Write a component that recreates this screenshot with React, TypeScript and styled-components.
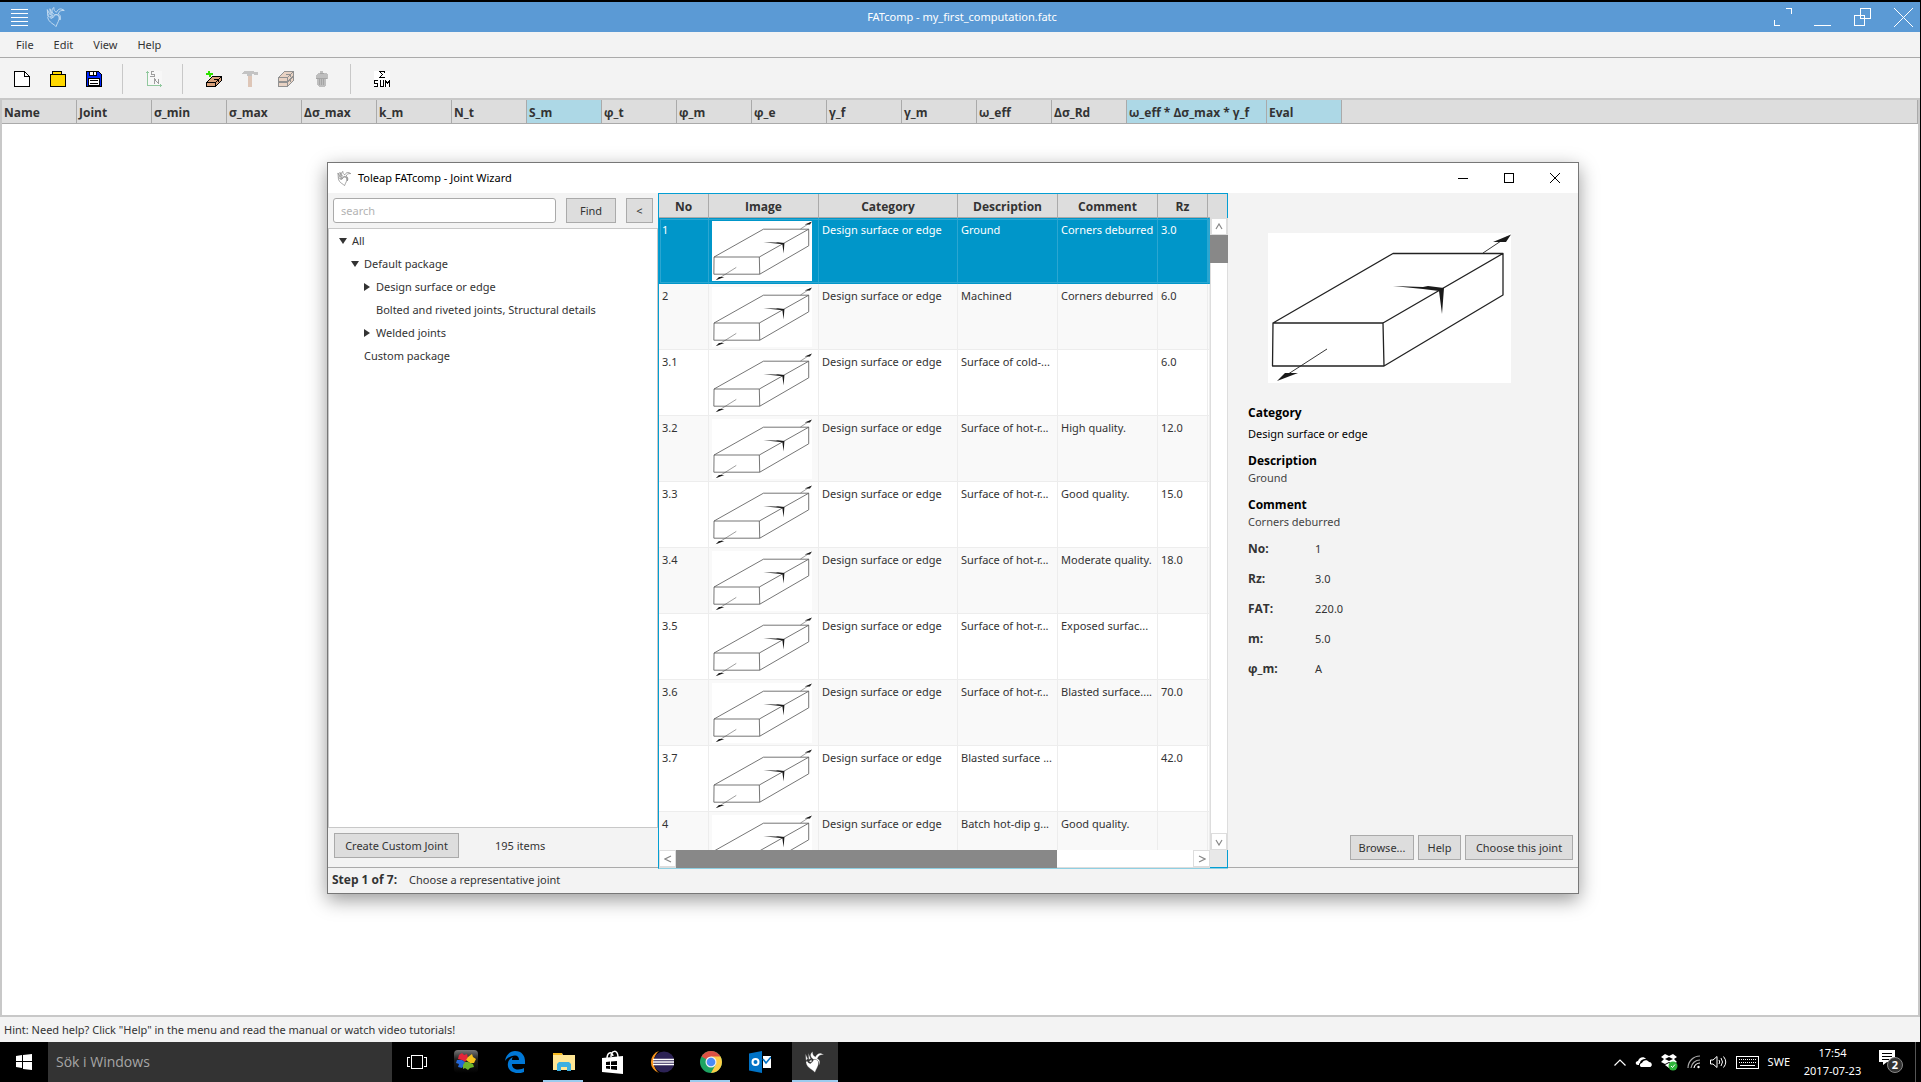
import React from "react";
import styled, { createGlobalStyle, css } from "styled-components";

const GlobalStyle = createGlobalStyle`
  *, *::before, *::after { box-sizing: border-box; }
  html, body { margin: 0; height: 100%; }
  body {
    font-family: "Noto Sans", "Open Sans", sans-serif;
    font-size: 11px;
    line-height: 18px;
    color: #333;
    background: #000;
    overflow: hidden;
  }
  button, input { font: inherit; color: inherit; }
  ul { list-style: none; margin: 0; padding: 0; }
`;

const boldText = css`
  font-family: "Open Sans", "Noto Sans", sans-serif;
  font-size: 12px;
  font-weight: bold;
`;

const Desktop = styled.div`
  position: relative;
  display: flex;
  flex-direction: column;
  height: 100vh;
`;

const MainWindow = styled.div`
  flex: 1;
  min-height: 0;
  display: flex;
  flex-direction: column;
  background: #f3f3f3;
  border-top: 2px solid #000;
  border-right: 1px solid #000;
`;

const TitleBar = styled.header`
  display: grid;
  grid-template-columns: 1fr auto 1fr;
  align-items: center;
  height: 30px;
  padding: 0 7px 0 11px;
  background: #5b9ad5;
  color: #fff;
`;

const TitleGroup = styled.div<{ $end?: boolean; $gap: number }>`
  display: flex;
  align-items: center;
  justify-content: ${(p) => (p.$end ? "flex-end" : "flex-start")};
  gap: ${(p) => p.$gap}px;
`;

const IconButton = styled.button`
  display: flex;
  align-items: center;
  justify-content: center;
  padding: 0;
  border: 0;
  background: none;
  color: inherit;
`;

const MenuBar = styled.nav`
  display: flex;
  height: 26px;
  padding: 1px 6px 0;
  border-bottom: 1px solid #aaa;
`;

const MenuItem = styled.button`
  padding: 0 10px;
  border: 0;
  background: none;
`;

const ToolBar = styled.div`
  display: flex;
  align-items: center;
  height: 40px;
  padding: 2px 14px 0;
  gap: 20px;
`;

const ToolGroup = styled.div`
  display: flex;
  align-items: center;
  gap: 20px;
  & + & {
    border-left: 1px solid #c8c8c8;
    height: 30px;
    padding-left: 23px;
  }
`;

const ResultArea = styled.section`
  flex: 1;
  min-height: 0;
  background: #fff;
  border: 2px solid #c8c8c8;
`;

const ResultTable = styled.table`
  width: 100%;
  table-layout: fixed;
  border-collapse: separate;
  border-spacing: 0;
`;

const ResultHead = styled.th<{ $w?: number; $tint?: boolean }>`
  ${boldText}
  width: ${(p) => (p.$w ? p.$w + "px" : "auto")};
  height: 24px;
  padding: 2px 0 0 2px;
  text-align: left;
  white-space: nowrap;
  background: ${(p) => (p.$tint ? "#add8e6" : "#ddd")};
  border-right: 1px solid #aaa;
  border-bottom: 1px solid #aaa;
`;

const HintBar = styled.footer`
  height: 25px;
  padding: 4px 4px 0;
`;

/* Joint wizard window */

const Wizard = styled.section`
  position: absolute;
  left: 327px;
  top: 162px;
  width: 1252px;
  height: 732px;
  display: flex;
  flex-direction: column;
  background: #f3f3f3;
  border: 1px solid #777;
  box-shadow: 0 6px 18px rgba(0, 0, 0, 0.4);
`;

const WizardTitle = styled.header`
  display: flex;
  align-items: center;
  height: 30px;
  padding: 0 18px 0 9px;
  gap: 6px;
  background: #fff;
  color: #000;
`;

const WizardName = styled.span`
  flex: 1;
`;

const WizardBody = styled.div`
  flex: 1;
  min-height: 0;
  display: grid;
  grid-template-columns: 330px 570px minmax(0, 1fr);
`;

const SidePane = styled.div`
  display: flex;
  flex-direction: column;
  min-height: 0;
`;

const SearchRow = styled.form`
  display: flex;
  align-items: center;
  gap: 10px;
  height: 35px;
  padding: 0 5px;
`;

const SearchBox = styled.input`
  flex: 1;
  min-width: 0;
  height: 25px;
  padding: 0 7px;
  background: #fff;
  border: 1px solid #aaa;
  border-radius: 3px;
  &::placeholder { color: #b3b3b3; opacity: 1; }
`;

const PushButton = styled.button<{ $w?: number }>`
  height: 25px;
  width: ${(p) => (p.$w ? p.$w + "px" : "auto")};
  padding: 0;
  line-height: 22px;
  white-space: nowrap;
  background: #ddd;
  border: 1px solid #aaa;
`;

const Tree = styled.ul`
  flex: 1;
  background: #fff;
  border: 1px solid #c8c8c8;
`;

const TreeItem = styled.li<{ $level: number }>`
  display: flex;
  align-items: center;
  gap: 5px;
  height: 23px;
  padding-left: ${(p) => 10 + p.$level * 12}px;
`;

const Twisty = styled.svg`
  width: 8px;
  height: 8px;
  fill: #333;
`;

const SideFoot = styled.div`
  display: flex;
  align-items: center;
  gap: 36px;
  height: 39px;
  padding: 0 6px 4px;
`;

const Listing = styled.div`
  position: relative;
  z-index: 1;
  display: grid;
  grid-template-columns: 1fr 18px;
  grid-template-rows: 24px 1fr 18px;
  min-height: 0;
  margin-bottom: -2px;
  border-top: 1px solid #039ed3;
  border-left: 1px solid #039ed3;
  border-bottom: 1px solid #8fd0e3;
`;

const ListingView = styled.div`
  grid-row: 1 / 3;
  grid-column: 1;
  overflow: hidden;
  background: #fff;
`;

const JointTable = styled.table`
  width: 100%;
  table-layout: fixed;
  border-collapse: separate;
  border-spacing: 0;
`;

const JointHead = styled.th<{ $w: number }>`
  ${boldText}
  width: ${(p) => p.$w}px;
  height: 24px;
  padding: 2px 0 0;
  background: #ddd;
  border-bottom: 1px solid #aaa;
  border-right: ${(p) => (p.$w > 10 ? "1px solid #aaa" : "0")};
`;

const JointCell = styled.td`
  height: 66px;
  padding: 3px 0 0 3px;
  vertical-align: top;
  white-space: nowrap;
  border-right: 1px solid #ededed;
  border-bottom: 1px solid #ededed;
`;

const JointRow = styled.tr<{ $selected?: boolean }>`
  &:nth-child(even) { background: #f9f9f9; }
  ${(p) =>
    p.$selected &&
    css`
      background: #0096c9;
      color: #fff;
      outline: 1px solid #2ba6d1;
      outline-offset: -2px;
      ${JointCell} {
        border-right-color: #2ba6d1;
        border-bottom-color: #0096c9;
      }
    `}
`;

const Corner = styled.div<{ $foot?: boolean }>`
  background: ${(p) => (p.$foot ? "#e8e8e8" : "#ddd")};
  border-right: 1px solid #039ed3;
  border-bottom: ${(p) => (p.$foot ? "1px solid #039ed3" : "0")};
`;

const ScrollBar = styled.div<{ $horizontal?: boolean }>`
  display: flex;
  flex-direction: ${(p) => (p.$horizontal ? "row" : "column")};
  background: #fff;
  border: solid #ddd;
  border-width: ${(p) => (p.$horizontal ? "0 0 1px" : "0 1px")};
`;

const ScrollButton = styled.button`
  display: flex;
  align-items: center;
  justify-content: center;
  flex: 0 0 17px;
  padding: 0;
  background: #fff;
  border: 1px solid #ddd;
  line-height: 1;
  color: #888;
`;

const Thumb = styled.div<{ $size: number; $horizontal?: boolean }>`
  flex: 0 0 ${(p) => p.$size}px;
  margin: ${(p) => (p.$horizontal ? "0 0 -1px" : "0 -1px")};
  background: #888;
`;

const Track = styled.div`
  flex: 1;
`;

const Details = styled.aside`
  display: flex;
  flex-direction: column;
  min-width: 0;
  padding: 40px 5px 7px 20px;
`;

const Preview = styled.div`
  display: flex;
  margin: 0 0 21px 20px;
`;

const Heading = styled.h3<{ $spaced?: boolean }>`
  ${boldText}
  margin: 0;
  padding-bottom: ${(p) => (p.$spaced ? 4 : 0)}px;
  line-height: 18px;
  color: #000;
`;

const Paragraph = styled.p<{ $dark?: boolean }>`
  margin: 0 0 10px;
  line-height: 16px;
  color: ${(p) => (p.$dark ? "#000" : "#444")};
`;

const Facts = styled.dl`
  display: grid;
  grid-template-columns: 67px 1fr;
  row-gap: 12px;
  margin: 0;
  dt { ${boldText} }
  dd { margin: 0; }
`;

const Actions = styled.div`
  display: flex;
  justify-content: flex-end;
  gap: 4px;
  margin-top: auto;
`;

const StepBar = styled.footer`
  display: flex;
  align-items: center;
  gap: 12px;
  height: 26px;
  padding: 0 4px 1px;
  border-top: 1px solid #aaa;
`;

const Strong = styled.strong`
  ${boldText}
`;

/* Taskbar */

const TaskBar = styled.footer`
  display: flex;
  height: 40px;
  background: #000;
  color: #fff;
`;

const StartButton = styled(IconButton)`
  width: 48px;
`;

const TaskSearch = styled.input`
  width: 344px;
  padding: 0 8px;
  border: 0;
  background: #333;
  font-family: "Open Sans", "Noto Sans", sans-serif;
  font-size: 14px;
  &::placeholder { color: #a6a6a6; opacity: 1; }
`;

const TaskButton = styled(IconButton)<{ $open?: boolean; $active?: boolean }>`
  width: 49px;
  ${(p) => p.$open && css`
    background: linear-gradient(#9ccbee, #9ccbee) 4px 100% / 40px 2px no-repeat;
  `}
  ${(p) => p.$active && css`
    background: linear-gradient(#9ccbee, #9ccbee) 0 100% / 100% 2px no-repeat #333;
    width: 46px;
    margin-left: 8px;
  `}
`;

const Tray = styled.div`
  display: flex;
  align-items: center;
  margin-left: auto;
  padding-right: 5px;
  gap: 9px;
`;

const TrayEnd = styled.div`
  display: flex;
  align-items: center;
`;

const Clock = styled.time`
  width: 67px;
  text-align: center;
`;

const Notice = styled(IconButton)`
  width: 50px;
  height: 40px;
  border-right: 1px solid #555;
`;

/* Drawings */

const Hand = ({ size, stroke, fill = "none" }: { size: number; stroke: string; fill?: string }) => (
  <svg width={size} height={size} viewBox="0 0 21 23" fill={fill} stroke={stroke} strokeWidth={fill === "none" ? 1 : 0.3} strokeLinejoin="round" aria-hidden="true">
    <path d="M8 11 C9 8 13 8 14 11 C15 15 12 18 10.500 22.500 C9 20 2 18 1 12 L2 10 C3 12 4 13 6 13 Z" />
    <path d="M9 9 C5 6 5 3 8 .5 C8 4 9 5 11 6 C13 2 16 1 20 4 C16 3.500 14 5 13 8 C16 9 16 12 15 15 C15 11 13 8 9 9 Z" />
    <path d="M1 10 L.5 3 L3 8 Z M4 9 L3.500 2 L6 8 Z M4 11 L7 9 L7 12 Z" />
  </svg>
);

const JointDrawing = ({ width, height, weight, color }: { width: number; height: number; weight: number; color: string }) => (
  <svg width={width} height={height} viewBox="0 0 243 150" preserveAspectRatio="none" style={{ display: "block" }} role="img" aria-label="Joint">
    <rect width="243" height="150" fill="#fff" />
    <g fill="none" stroke={color} strokeWidth={weight} strokeLinejoin="round">
      <path d="M5 90 L125 20.500 H235 V62 L116 133 H4.500 L5 90 H115 L116 133 M115 90 L235 20.500" />
      <path d="M59 116 L14 145 M215 20 L239 4" strokeWidth={weight * 0.7} />
    </g>
    <g fill="#1a1a1a">
      <path d="M125 53 L155 54 L160 53 L176 55 L174 81 L171 58 L155 56 Z" />
      <path d="M243 1.500 L225 9 L238 9 Z M9 148 L17 140 L30 140 Z" />
    </g>
  </svg>
);

const Px = ({ children, dim }: { children: React.ReactNode; dim?: boolean }) => (
  <svg width="16" height="16" viewBox="0 0 16 16" shapeRendering="crispEdges" opacity={dim ? 0.4 : 1} aria-hidden="true">
    {children}
  </svg>
);

const NewIcon = () => (
  <Px><path d="M.5 .5 H10.500 L15.500 5.500 V15.500 H.5 Z" fill="#fff" stroke="#000" /><path d="M10.500 .5 V5.500 H15.500" fill="none" stroke="#000" /></Px>
);
const OpenIcon = () => (
  <Px><path d="M.5 3.500 H2.500 V.5 H11.500 V3.500 H15.500 V15.500 H.5 Z" fill="#ffd800" stroke="#000" /><path d="M3 3.500 H12" stroke="#000" /></Px>
);
const SaveIcon = () => (
  <Px>
    <path d="M.5 .5 H12.500 L15.500 3.500 V15.500 H.5 Z" fill="#0026ff" stroke="#000" />
    <path d="M3 1 H11 V5 H3 Z" fill="#000" /><path d="M4 1 H7 V4 H4 Z M8 1 H10 V4 H8 Z" fill="#fff" />
    <path d="M2.500 7.500 H13.500 V14.500 H2.500 Z" fill="#fff" stroke="#000" /><path d="M4 9.500 H12 M4 12.500 H12" stroke="#000" />
  </Px>
);
const CurveIcon = () => (
  <Px dim>
    <rect x="2" width="14" height="14" fill="#fff" />
    <path d="M1.500 0 V14.500 H16 M0 1.500 H3 M14.500 13 V16" fill="none" stroke="#008a22" />
    <path d="M8 .5 H5 V3.500 H8 V5.500 H4 M8.500 13 V8 L12.500 12.500 V8" fill="none" stroke="#222" />
  </Px>
);
const Brick = ({ y }: { y: number }) => (
  <g transform={`translate(0 ${y})`}>
    <path d="M.5 6.500 L6.500 .5 H15.500 V4.500 L9.500 10.500 H.5 Z" fill="#d9a27c" stroke="#000" />
    <path d="M.5 6.500 H9.500 L15.500 .5 M9.500 6.500 V10.500 M8 3.500 H12.500 V6" fill="none" stroke="#000" />
  </g>
);
const AddJointIcon = () => (
  <Px><Brick y={5} /><path d="M0 2 H2 V0 H4 V2 H7 V4 H5 V6 H3 V4 H0 Z" fill="#2de000" /></Px>
);
const HammerIcon = () => (
  <Px dim><path d="M0 2 L3 0 H12 V1 H16 V4 H12 V3 H10 V5 H5 V3 H0 Z" fill="#7d7d7d" /><path d="M6 5 H10 V16 H6 Z" fill="#c08560" /></Px>
);
const StackIcon = () => (<Px dim><Brick y={5} /><Brick y={0} /></Px>);
const TrashIcon = () => (
  <Px dim><path d="M2 4 L4 2 H6 V0 H9 V2 H12 L14 4 V8 H12 V14 L10 16 H5 L3 14 V8 H2 Z" fill="#707070" /><path d="M2 7.500 H13 M5.500 8 V14 M7.500 8 V14 M9.500 8 V14 M6 2.500 H10" stroke="#333" fill="none" /></Px>
);
const SumIcon = () => (
  <Px>
    <rect width="16" height="16" fill="#fff" />
    <path d="M10.500 1.500 V.5 H6 L8.500 3.500 L6 6.500 H10.500 V5.500" fill="none" stroke="#000" />
    <path d="M4 9.500 H.5 V12.500 H3.500 V15.500 H0 M6.500 9 V15.500 H9.500 V9 M11.500 16 V9.500 L13.500 12 L15.500 9.500 V16" fill="none" stroke="#000" />
  </Px>
);

const WindowGlyph = ({ d, size = 19 }: { d: string; size?: number }) => (
  <svg width={size} height={size} viewBox={`0 0 ${size} ${size}`} fill="none" stroke="currentColor" shapeRendering="crispEdges" aria-hidden="true"><path d={d} /></svg>
);

const ScrollChevron = ({ d }: { d: string }) => (
  <svg width="8" height="8" viewBox="0 0 8 8" fill="none" stroke="#888" strokeWidth="1.200" aria-hidden="true"><path d={d} /></svg>
);

const resultColumns: [string, number, boolean][] = [
  ["Name", 75, false], ["Joint", 75, false], ["σ_min", 75, false], ["σ_max", 75, false], ["Δσ_max", 75, false],
  ["k_m", 75, false], ["N_t", 75, false], ["S_m", 75, true], ["φ_t", 75, false], ["φ_m", 75, false],
  ["φ_e", 75, false], ["γ_f", 75, false], ["γ_m", 75, false], ["ω_eff", 75, false], ["Δσ_Rd", 75, false],
  ["ω_eff * Δσ_max * γ_f", 140, true], ["Eval", 75, true],
];

const treeItems: { label: string; level: number; state?: "open" | "closed" }[] = [
  { label: "All", level: 0, state: "open" },
  { label: "Default package", level: 1, state: "open" },
  { label: "Design surface or edge", level: 2, state: "closed" },
  { label: "Bolted and riveted joints, Structural details", level: 2 },
  { label: "Welded joints", level: 2, state: "closed" },
  { label: "Custom package", level: 1 },
];

const jointColumns: [string, number][] = [
  ["No", 50], ["Image", 110], ["Category", 139], ["Description", 100], ["Comment", 100], ["Rz", 50], ["", 2],
];

const joints = [
  ["1", "Ground", "Corners deburred", "3.0"],
  ["2", "Machined", "Corners deburred", "6.0"],
  ["3.1", "Surface of cold-...", "", "6.0"],
  ["3.2", "Surface of hot-r...", "High quality.", "12.0"],
  ["3.3", "Surface of hot-r...", "Good quality.", "15.0"],
  ["3.4", "Surface of hot-r...", "Moderate quality.", "18.0"],
  ["3.5", "Surface of hot-r...", "Exposed surfac...", ""],
  ["3.6", "Surface of hot-r...", "Blasted surface....", "70.0"],
  ["3.7", "Blasted surface ...", "", "42.0"],
  ["4", "Batch hot-dip g...", "Good quality.", ""],
];

const facts = [["No:", "1"], ["Rz:", "3.0"], ["FAT:", "220.0"], ["m:", "5.0"], ["φ_m:", "A"]];

const Taskbar = () => (
  <TaskBar>
    <StartButton aria-label="Start">
      <svg width="16" height="16" viewBox="0 0 16 16" fill="#fff"><path d="M0 2 L6 1 V7 H0 Z M7 1 L16 0 V7 H7 Z M0 8 H6 V14 L0 13 Z M7 8 H16 V16 L7 15 Z" /></svg>
    </StartButton>
    <TaskSearch aria-label="Sök i Windows" placeholder="Sök i Windows" />
    <TaskButton aria-label="Task view">
      <svg width="20" height="14" viewBox="0 0 20 14" fill="none" stroke="#fff" shapeRendering="crispEdges"><path d="M4.500 .5 H15.500 V13.500 H4.500 Z M3 2.500 H.5 V11.500 H3 M17 2.500 H19.500 V11.500 H17" /></svg>
    </TaskButton>
    <TaskButton aria-label="Puzzle">
      <svg width="24" height="24" viewBox="0 0 24 24">
        <defs><linearGradient id="tile" x2="0" y2="1"><stop offset="0" stopColor="#777" /><stop offset=".4" stopColor="#222" /><stop offset="1" stopColor="#000" /></linearGradient></defs>
        <rect width="24" height="23" rx="4" fill="url(#tile)" />
        <path d="M5 5 L8 3 L10 5 L13 4 L14 8 L11 12 L8 10 L4 9 Z" fill="#e3263a" />
        <path d="M14 7 L18 4 L19 7 L22 9 L20 13 L16 13 L12 10 Z" fill="#f6c21c" />
        <path d="M3 10 L8 10 L11 12 L10 15 L8 18 L4 17 L5 14 L2 13 Z" fill="#2468d8" />
        <path d="M11 12 L14 12 L19 14 L20 17 L16 18 L14 20 L11 18 L9 19 L9 15 Z" fill="#6fb52c" />
      </svg>
    </TaskButton>
    <TaskButton aria-label="Edge">
      <svg width="22" height="22" viewBox="0 0 22 22"><path d="M1 10 C2 3 7 0 11 0 C18 0 21 5 21 10 V13 H8 C8 17 11 18.500 14 18.500 C17 18.500 19 17.500 20 17 V21 C18 22 15 22.500 12 22 C6 21 3 17 4 12 C4.500 9 6.500 7 9 6 C8 7 8 8 8 9 H15 C15 6 13.500 4.500 11 4.500 C7 4.500 3 7 1 10 Z" fill="#0078d7" /></svg>
    </TaskButton>
    <TaskButton $open aria-label="Explorer">
      <svg width="22" height="20" viewBox="0 0 22 20"><path d="M0 1 H9 L10 3 H22 V18 H0 Z" fill="#ffe694" /><path d="M0 1 H9 V3 H0 Z" fill="#f5b81c" /><path d="M4 19 V12 L6 10 H16 L18 12 V19 H14 V15 H8 V19 Z" fill="#3bb0e2" /></svg>
    </TaskButton>
    <TaskButton aria-label="Store">
      <svg width="22" height="24" viewBox="0 0 22 24"><path d="M0 8 L21 6 V24 L0 22 Z" fill="#fff" /><path d="M5 9 C5 2 10 1 11 6 M9 7 C9 0 16 -1 16 7" fill="none" stroke="#fff" strokeWidth="1.500" /><path d="M4 12 L8 11.500 V15 H4 Z M9 11.400 L15 11 V15 H9 Z M4 16 H8 V19 L4 18.500 Z M9 16 H15 V20 L9 19.200 Z" fill="#000" /></svg>
    </TaskButton>
    <TaskButton aria-label="Eclipse">
      <svg width="24" height="22" viewBox="0 0 24 22"><path d="M9 0 A11.500 11.500 0 0 0 9 22 A14 14 0 0 1 9 0" fill="#f7941e" /><circle cx="14" cy="11" r="10.500" fill="#2c2255" /><path d="M3 8.500 H24 M3 11 H24 M3 13.500 H24" stroke="#fff" strokeWidth="1.400" /></svg>
    </TaskButton>
    <TaskButton $open aria-label="Chrome">
      <svg width="22" height="22" viewBox="0 0 22 22"><circle cx="11" cy="11" r="11" fill="#1da462" /><path d="M11 11 L1.500 5.500 A11 11 0 0 1 20.500 5.500 Z" fill="#dd5144" /><path d="M11 5.500 H20.500 A11 11 0 0 1 11 22 L16 13 Z" fill="#ffcd46" /><circle cx="11" cy="11" r="5.500" fill="#f1f1f1" /><circle cx="11" cy="11" r="4.300" fill="#4c8bf5" /></svg>
    </TaskButton>
    <TaskButton aria-label="Outlook">
      <svg width="22" height="22" viewBox="0 0 22 22"><path d="M0 2.500 L13 0 V22 L0 19.500 Z" fill="#0072c6" /><circle cx="6.500" cy="11" r="3" fill="none" stroke="#fff" strokeWidth="2" /><path d="M14 5 H22 V17 H14 Z" fill="#fff" /><path d="M14 8 L17 12 L22 6" fill="none" stroke="#0072c6" strokeWidth="1.500" /></svg>
    </TaskButton>
    <TaskButton $active aria-label="FATcomp"><Hand size={22} stroke="#333" fill="#fff" /></TaskButton>
    <Tray>
      <svg width="12" height="7" viewBox="0 0 12 7" fill="none" stroke="#fff" strokeWidth="1.200"><path d="M.5 6.500 L6 1 L11.500 6.500" /></svg>
      <svg width="17" height="10" viewBox="0 0 17 10" fill="#fff"><path d="M3 8 C0 8 0 4 3 4 C4 0 9 -1 11 2 C7 2 5 4 5 6 C4 6 4 7 4 8 Z" /><path d="M6 10 C4 9 5 6 7 6 C8 3 12 2 14 5 C17 5 18 9 15 10 Z" /></svg>
      <svg width="17" height="17" viewBox="0 0 17 17"><path d="M4 0 L8 2 L12 0 L16 3 L13 5 L16 8 L12 10 L8 8 L4 10 L0 8 L3 5 L0 3 Z M4 11 L8 9 L12 11 L8 14 Z" fill="#fff" /><path d="M8 3 L12 5 L8 7 L4 5 Z" fill="#000" /><circle cx="12" cy="12" r="4.500" fill="#2eb33a" /><path d="M10 12 L11.500 13.500 L14 10.500" fill="none" stroke="#fff" /></svg>
      <svg width="14" height="14" viewBox="0 0 14 14" fill="none" stroke="#aaa" strokeWidth="1.200"><path d="M1 13 A12 12 0 0 1 13 1 M4 13 A9 9 0 0 1 13 5" /><path d="M7 13 A6 6 0 0 1 13 8" stroke="#fff" /><circle cx="11.500" cy="12" r="1.200" fill="#fff" stroke="none" /></svg>
      <svg width="17" height="14" viewBox="0 0 17 14" fill="none" stroke="#fff"><path d="M.5 5 H3 L7 1.500 V12.500 L3 9 H.5 Z M9 5 Q10.500 7 9 9 M11 3 Q14 7 11 11 M13.500 1.500 Q18 7 13.500 12.500" /></svg>
      <svg width="23" height="13" viewBox="0 0 23 13" fill="none" stroke="#fff" shapeRendering="crispEdges"><path d="M.5 .5 H22.500 V12.500 H.5 Z" /><path d="M3 3.500 H20 M3 6.500 H20" strokeDasharray="1 1" /><path d="M4 9.500 H19" /></svg>
      <span>SWE</span>
      <TrayEnd>
        <Clock>17:54<br />2017-07-23</Clock>
        <Notice aria-label="2 notifications">
          <svg width="24" height="24" viewBox="0 0 24 24"><path d="M0 0 H16 V12 H8 L4 15 V12 H0 Z" fill="#fff" /><path d="M3 3.500 H13 M3 6.500 H13 M3 9.500 H10" stroke="#000" /><circle cx="16" cy="15" r="7.500" fill="#333" stroke="#888" /><text x="16" y="19" fontSize="11" fontWeight="bold" textAnchor="middle" fill="#fff">2</text></svg>
        </Notice>
      </TrayEnd>
    </Tray>
  </TaskBar>
);

const JointWizard = () => (
  <Wizard role="dialog" aria-label="Joint Wizard">
    <WizardTitle>
      <Hand size={15} stroke="#777" />
      <WizardName>Toleap FATcomp - Joint Wizard</WizardName>
      <TitleGroup $gap={36} $end>
        <IconButton aria-label="Minimize"><WindowGlyph size={10} d="M0 5.500 H10" /></IconButton>
        <IconButton aria-label="Maximize"><WindowGlyph size={10} d="M.5 .5 H9.500 V9.500 H.5 Z" /></IconButton>
        <IconButton aria-label="Close"><WindowGlyph size={10} d="M0 0 L10 10 M10 0 L0 10" /></IconButton>
      </TitleGroup>
    </WizardTitle>
    <WizardBody>
      <SidePane>
        <SearchRow onSubmit={(e) => e.preventDefault()}>
          <SearchBox aria-label="search" placeholder="search" />
          <PushButton $w={50}>Find</PushButton>
          <PushButton $w={27} type="button">&lt;</PushButton>
        </SearchRow>
        <Tree role="tree">
          {treeItems.map((t) => (
            <TreeItem key={t.label} $level={t.level} role="treeitem">
              <Twisty viewBox="0 0 8 8" aria-hidden="true">
                {t.state && <path d={t.state === "open" ? "M0 1 H8 L4 7 Z" : "M1 0 V8 L7 4 Z"} />}
              </Twisty>
              {t.label}
            </TreeItem>
          ))}
        </Tree>
        <SideFoot>
          <PushButton $w={125}>Create Custom Joint</PushButton>
          <span>195 items</span>
        </SideFoot>
      </SidePane>
      <Listing>
        <ListingView>
          <JointTable>
            <thead>
              <tr>{jointColumns.map(([name, w]) => <JointHead key={name} $w={w}>{name}</JointHead>)}</tr>
            </thead>
            <tbody>
              {joints.map(([no, description, comment, rz], i) => (
                <JointRow key={no} $selected={i === 0}>
                  <JointCell>{no}</JointCell>
                  <JointCell><JointDrawing width={100} height={60} weight={2} color="#555" /></JointCell>
                  <JointCell>Design surface or edge</JointCell>
                  <JointCell>{description}</JointCell>
                  <JointCell>{comment}</JointCell>
                  <JointCell>{rz}</JointCell>
                  <JointCell />
                </JointRow>
              ))}
            </tbody>
          </JointTable>
        </ListingView>
        <Corner />
        <ScrollBar>
          <ScrollButton aria-label="Scroll up"><ScrollChevron d="M1 6 L4 1 L7 6" /></ScrollButton>
          <Thumb $size={28} />
          <Track />
          <ScrollButton aria-label="Scroll down"><ScrollChevron d="M1 2 L4 7 L7 2" /></ScrollButton>
        </ScrollBar>
        <ScrollBar $horizontal>
          <ScrollButton aria-label="Scroll left"><ScrollChevron d="M7 1 L1 4 L7 7" /></ScrollButton>
          <Thumb $size={381} $horizontal />
          <Track />
          <ScrollButton aria-label="Scroll right"><ScrollChevron d="M1 1 L7 4 L1 7" /></ScrollButton>
        </ScrollBar>
        <Corner $foot />
      </Listing>
      <Details>
        <Preview><JointDrawing width={243} height={150} weight={1.3} color="#222" /></Preview>
        <Heading $spaced>Category</Heading>
        <Paragraph $dark>Design surface or edge</Paragraph>
        <Heading>Description</Heading>
        <Paragraph>Ground</Paragraph>
        <Heading>Comment</Heading>
        <Paragraph>Corners deburred</Paragraph>
        <Facts>
          {facts.map(([k, v]) => (
            <React.Fragment key={k}><dt>{k}</dt><dd>{v}</dd></React.Fragment>
          ))}
        </Facts>
        <Actions>
          <PushButton $w={64}>Browse...</PushButton>
          <PushButton $w={43}>Help</PushButton>
          <PushButton $w={108}>Choose this joint</PushButton>
        </Actions>
      </Details>
    </WizardBody>
    <StepBar>
      <Strong>Step 1 of 7:</Strong>
      <span>Choose a representative joint</span>
    </StepBar>
  </Wizard>
);

export default function App() {
  return (
    <Desktop>
      <GlobalStyle />
      <MainWindow>
        <TitleBar>
          <TitleGroup $gap={16}>
            <IconButton aria-label="Menu"><WindowGlyph d="M0 1.500 H17 M0 5.500 H17 M0 9.500 H17 M0 13.500 H17 M0 17.500 H17" /></IconButton>
            <Hand size={20} stroke="#cfe2f4" />
          </TitleGroup>
          <span>FATcomp - my_first_computation.fatc</span>
          <TitleGroup $gap={21} $end>
            <IconButton aria-label="Full screen"><WindowGlyph d="M12 .5 H17.500 V6 M.5 12 V17.500 H6" /></IconButton>
            <IconButton aria-label="Minimize"><WindowGlyph d="M0 17.500 H17" /></IconButton>
            <IconButton aria-label="Restore"><WindowGlyph d="M6.500 .5 H16.500 V10.500 H6.500 Z M.5 7.500 H10.500 V17.500 H.5 Z" /></IconButton>
            <IconButton aria-label="Close"><WindowGlyph d="M0 0 L19 19 M19 0 L0 19" /></IconButton>
          </TitleGroup>
        </TitleBar>
        <MenuBar>
          {["File", "Edit", "View", "Help"].map((m) => <MenuItem key={m}>{m}</MenuItem>)}
        </MenuBar>
        <ToolBar>
          <ToolGroup>
            <IconButton aria-label="New"><NewIcon /></IconButton>
            <IconButton aria-label="Open"><OpenIcon /></IconButton>
            <IconButton aria-label="Save"><SaveIcon /></IconButton>
          </ToolGroup>
          <ToolGroup>
            <IconButton aria-label="SN curve"><CurveIcon /></IconButton>
          </ToolGroup>
          <ToolGroup>
            <IconButton aria-label="Add joint"><AddJointIcon /></IconButton>
            <IconButton aria-label="Edit joint"><HammerIcon /></IconButton>
            <IconButton aria-label="Duplicate joint"><StackIcon /></IconButton>
            <IconButton aria-label="Delete joint"><TrashIcon /></IconButton>
          </ToolGroup>
          <ToolGroup>
            <IconButton aria-label="Summary"><SumIcon /></IconButton>
          </ToolGroup>
        </ToolBar>
        <ResultArea>
          <ResultTable>
            <thead>
              <tr>
                {resultColumns.map(([name, w, tint]) => <ResultHead key={name} $w={w} $tint={tint}>{name}</ResultHead>)}
                <ResultHead />
              </tr>
            </thead>
          </ResultTable>
        </ResultArea>
        <HintBar>Hint: Need help? Click "Help" in the menu and read the manual or watch video tutorials!</HintBar>
      </MainWindow>
      <Taskbar />
      <JointWizard />
    </Desktop>
  );
}
